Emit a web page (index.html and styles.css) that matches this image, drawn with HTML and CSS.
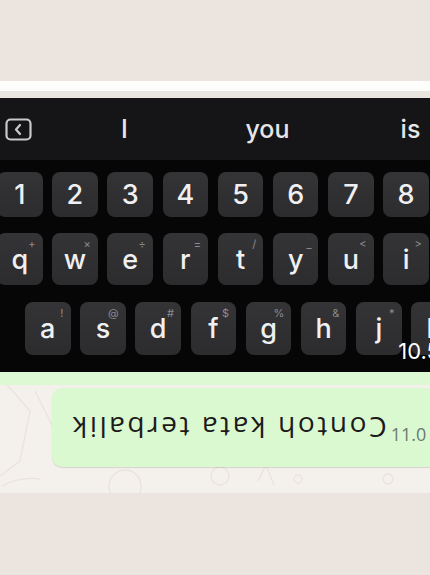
FILE: index.html
```html
<!DOCTYPE html>
<html lang="id">
<head>
    <meta charset="UTF-8">
    <meta name="viewport" content="width=device-width, initial-scale=1.0">
    <title>Contoh kata terbalik</title>
    <link rel="stylesheet" href="styles.css">
</head>
<body>
    <div class="top-gap"></div>

    <div class="chat">
        <!-- faint wallpaper doodles -->
        <svg class="doodles" width="430" height="412" viewBox="0 0 430 412">
            <g fill="none" stroke="#ebe3db" stroke-width="1.3">
                <path d="M4 300 L30 330 L20 380 L0 395"/>
                <path d="M35 310 L60 360"/>
                <circle cx="125" cy="405" r="16"/>
                <circle cx="220" cy="395" r="9"/>
                <path d="M258 400 L266 384 L274 404"/>
                <circle cx="298" cy="398" r="4"/>
                <circle cx="388" cy="398" r="5"/>
                <path d="M2 405 Q20 395 40 398"/>
            </g>
        </svg>

        <div class="prev-bubble"></div>

        <div class="shot">
            <div class="keyboard">
                <div class="suggest">
                    <span class="suggest-icon">
                        <svg width="27" height="23" viewBox="0 0 27 23">
                            <rect x="1.5" y="1.5" width="24" height="20" rx="4" fill="none" stroke="#c9c9cb" stroke-width="2.2"/>
                            <path d="M15 7 L11 11.5 L15 16" fill="none" stroke="#c9c9cb" stroke-width="2.2" stroke-linecap="round" stroke-linejoin="round"/>
                        </svg>
                    </span>
                    <span class="word">I</span>
                    <span class="word">you</span>
                    <span class="word">is</span>
                </div>

                <div class="keys">
                    <div class="row">
                        <div class="key">1</div>
                        <div class="key">2</div>
                        <div class="key">3</div>
                        <div class="key">4</div>
                        <div class="key">5</div>
                        <div class="key">6</div>
                        <div class="key">7</div>
                        <div class="key">8</div>
                        <div class="key">9</div>
                    </div>
                    <div class="row letters">
                        <div class="key">q<span class="alt">+</span></div>
                        <div class="key">w<span class="alt">×</span></div>
                        <div class="key">e<span class="alt">÷</span></div>
                        <div class="key">r<span class="alt">=</span></div>
                        <div class="key">t<span class="alt">/</span></div>
                        <div class="key">y<span class="alt">_</span></div>
                        <div class="key">u<span class="alt">&lt;</span></div>
                        <div class="key">i<span class="alt">&gt;</span></div>
                        <div class="key">o<span class="alt">[</span></div>
                    </div>
                    <div class="row letters home">
                        <div class="key">a<span class="alt">!</span></div>
                        <div class="key">s<span class="alt">@</span></div>
                        <div class="key">d<span class="alt">#</span></div>
                        <div class="key">f<span class="alt">$</span></div>
                        <div class="key">g<span class="alt">%</span></div>
                        <div class="key">h<span class="alt">&amp;</span></div>
                        <div class="key">j<span class="alt">*</span></div>
                        <div class="key">k<span class="alt">(</span></div>
                    </div>
                </div>

                <span class="shot-time">10.5</span>
            </div>
            <div class="shot-foot"></div>
        </div>

        <div class="msg">
            <p class="msg-text">Contoh kata terbalik</p>
            <span class="msg-time">11.0</span>
        </div>
    </div>
</body>
</html>
```

FILE: styles.css
```css
body {
    margin: 0;
    padding: 0;
    width: 430px;
    height: 575px;
    overflow: hidden;
    background-color: #ece5df;
    font-family: 'Inter', 'Liberation Sans', sans-serif;
}
.top-gap {
    height: 81px;
}
.chat {
    position: relative;
    background-color: #f4f0eb;
    padding-bottom: 26px;
    overflow: hidden;
}
.doodles {
    position: absolute;
    left: 0;
    top: 0;
}
.prev-bubble {
    position: relative;
    height: 10px;
    background-color: #fdfdfc;
    border-bottom: 7px solid #e9e6e0;
}
.shot {
    position: relative;
}
/* Keyboard screenshot */
.keyboard {
    position: relative;
    height: 274px;
    background-color: #060607;
    overflow: hidden;
}
.suggest {
    display: flex;
    align-items: center;
    height: 62px;
    background-color: #151517;
    padding-left: 5px;
}
.suggest-icon {
    display: flex;
    flex: 0 0 27px;
    margin-right: 21px;
}
.word {
    flex: 0 0 143px;
    text-align: center;
    color: #e6e6e8;
    font-size: 25px;
    font-weight: 500;
}
.keys {
    padding-top: 12px;
}
.row {
    display: flex;
    gap: 9.7px;
    margin-left: -3px;
    height: 45px;
}
.row.letters {
    height: 52px;
    margin-top: 16px;
}
.row.home {
    height: 53px;
    margin-top: 17px;
    margin-left: 25px;
}
.key {
    position: relative;
    flex: 0 0 45.5px;
    display: flex;
    justify-content: center;
    align-items: center;
    background: linear-gradient(#343437, #2c2c2f);
    border-radius: 8px;
    color: #f0f0f2;
    font-size: 27px;
    font-weight: 500;
}
.key .alt {
    position: absolute;
    top: 4px;
    right: 7px;
    font-size: 11px;
    font-weight: 400;
    color: #8c8c90;
}
.shot-time {
    position: absolute;
    right: -10px;
    bottom: 8px;
    color: #ffffff;
    font-size: 22px;
}
.shot-foot {
    height: 13px;
    background-color: #dcf9d3;
}
/* Message bubble */
.msg {
    position: relative;
    display: flex;
    align-items: center;
    margin: 3px 0 0 52px;
    height: 79px;
    background-color: #dbf9d1;
    border-radius: 10px 0 0 10px;
    box-shadow: 0 1px 1px rgba(0, 0, 0, 0.12);
    padding-left: 18px;
}
.msg-text {
    margin: 0;
    transform: rotate(180deg);
    font-family: 'Open Sans', 'Liberation Sans', sans-serif;
    font-size: 28px;
    letter-spacing: 2.6px;
    color: #1b1b1b;
    white-space: nowrap;
}
.msg-time {
    align-self: flex-end;
    margin: 0 0 21px 4px;
    font-family: 'Open Sans', 'Liberation Sans', sans-serif;
    font-size: 18px;
    color: #6b7a73;
    white-space: nowrap;
}
```
